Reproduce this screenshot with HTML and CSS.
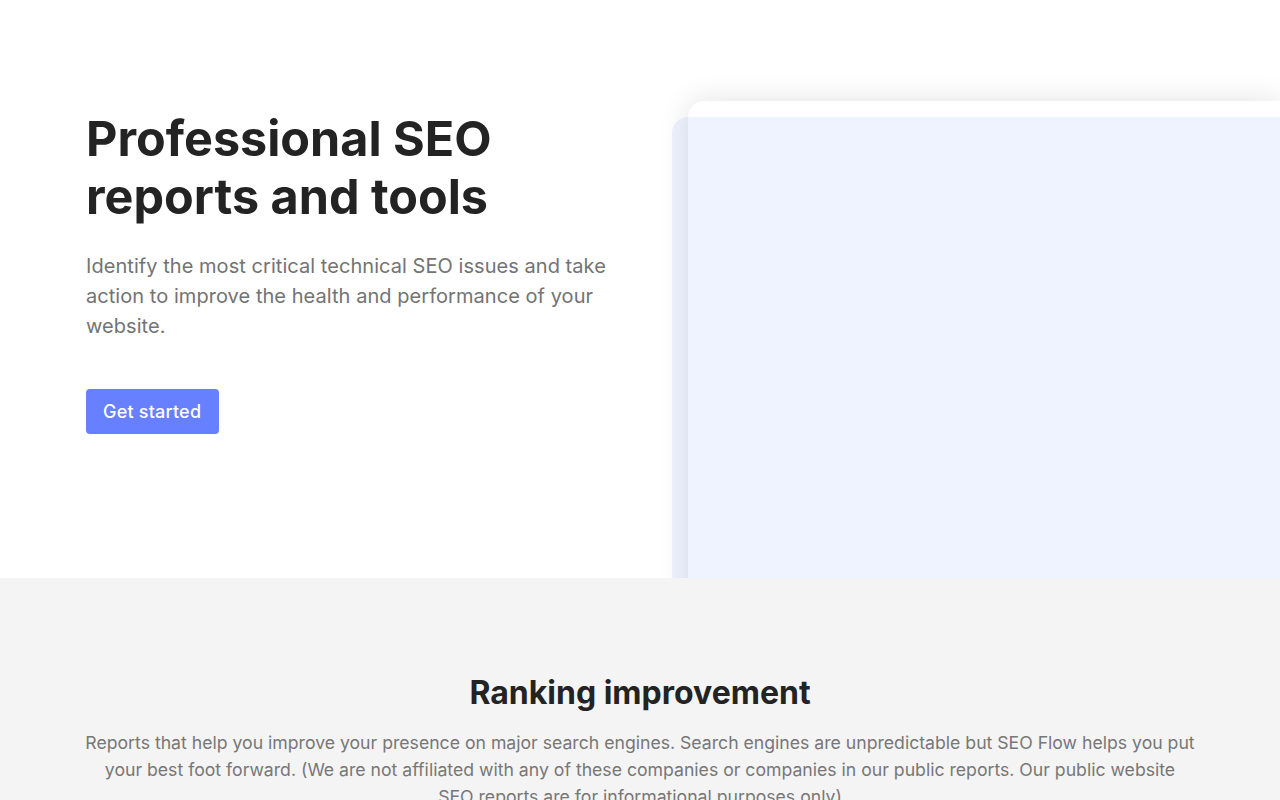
FILE: index.html
```html
<!DOCTYPE html>
<html lang="en">
<head>
    <meta charset="UTF-8">
    <meta name="viewport" content="width=device-width, initial-scale=1.0">
    <title>SEO Flow - Professional SEO reports and tools</title>
    <link rel="stylesheet" href="styles.css">
</head>
<body>
    <!-- hero -->
    <section class="hero">
        <div class="hero-text">
            <h1>Professional SEO reports and tools</h1>
            <p class="lead">Identify the most critical technical SEO issues and take action to improve the health and performance of your website.</p>
            <a class="start-btn" href="#">Get started</a>
        </div>
        <div class="hero-visual">
            <div class="preview-card">
                <div class="preview-tint"></div>
            </div>
        </div>
    </section>

    <!-- ranking -->
    <section class="ranking">
        <h2>Ranking improvement</h2>
        <p>Reports that help you improve your presence on major search engines. Search engines are unpredictable but SEO Flow helps you put your best foot forward. (We are not affiliated with any of these companies or companies in our public reports. Our public website SEO reports are for informational purposes only)</p>
    </section>
</body>
</html>
```

FILE: styles.css
```css
body {
    margin: 0;
    padding: 0;
    font-family: Inter, "Noto Sans", sans-serif;
    color: #222;
    background: #f4f4f4;
}

.hero {
    display: grid;
    grid-template-columns: 540px 1fr;
    column-gap: 62px;
    height: 578px;
    padding: 101px 0 0 86px;
    box-sizing: border-box;
    background: #fff;
    overflow: hidden;
}

.hero-text h1 {
    margin: 9px 0 0;
    font-size: 48.5px;
    line-height: 58px;
    font-weight: 700;
    color: #232323;
}

.lead {
    margin: 25px 0 0;
    font-size: 20px;
    line-height: 30px;
    letter-spacing: 0.05px;
    color: #737373;
}

.start-btn {
    display: inline-block;
    margin-top: 48px;
    padding: 0 18px 0 17px;
    height: 45px;
    line-height: 45px;
    font-size: 18px;
    font-weight: 500;
    letter-spacing: 0.2px;
    color: #fff;
    text-decoration: none;
    background-color: #6680ff;
    border-radius: 4px;
}

.preview-card {
    position: relative;
    height: 620px;
    background: #fff;
    border-radius: 16px 0 0 0;
    box-shadow: 0 0 30px rgba(0, 0, 0, 0.12);
}

/* blue panel over the card */
.preview-tint {
    position: absolute;
    top: 16px;
    left: -16px;
    right: 0;
    bottom: 0;
    background: rgba(98, 125, 255, 0.1);
    border-radius: 16px 0 0 0;
}

.ranking {
    padding: 91px 85px 40px;
    text-align: center;
}

.ranking h2 {
    margin: 0;
    font-size: 32px;
    line-height: 48px;
    font-weight: 700;
    color: #232323;
}

.ranking p {
    margin: 12px 0 0;
    font-size: 17.65px;
    line-height: 27px;
    color: #777;
}
```
